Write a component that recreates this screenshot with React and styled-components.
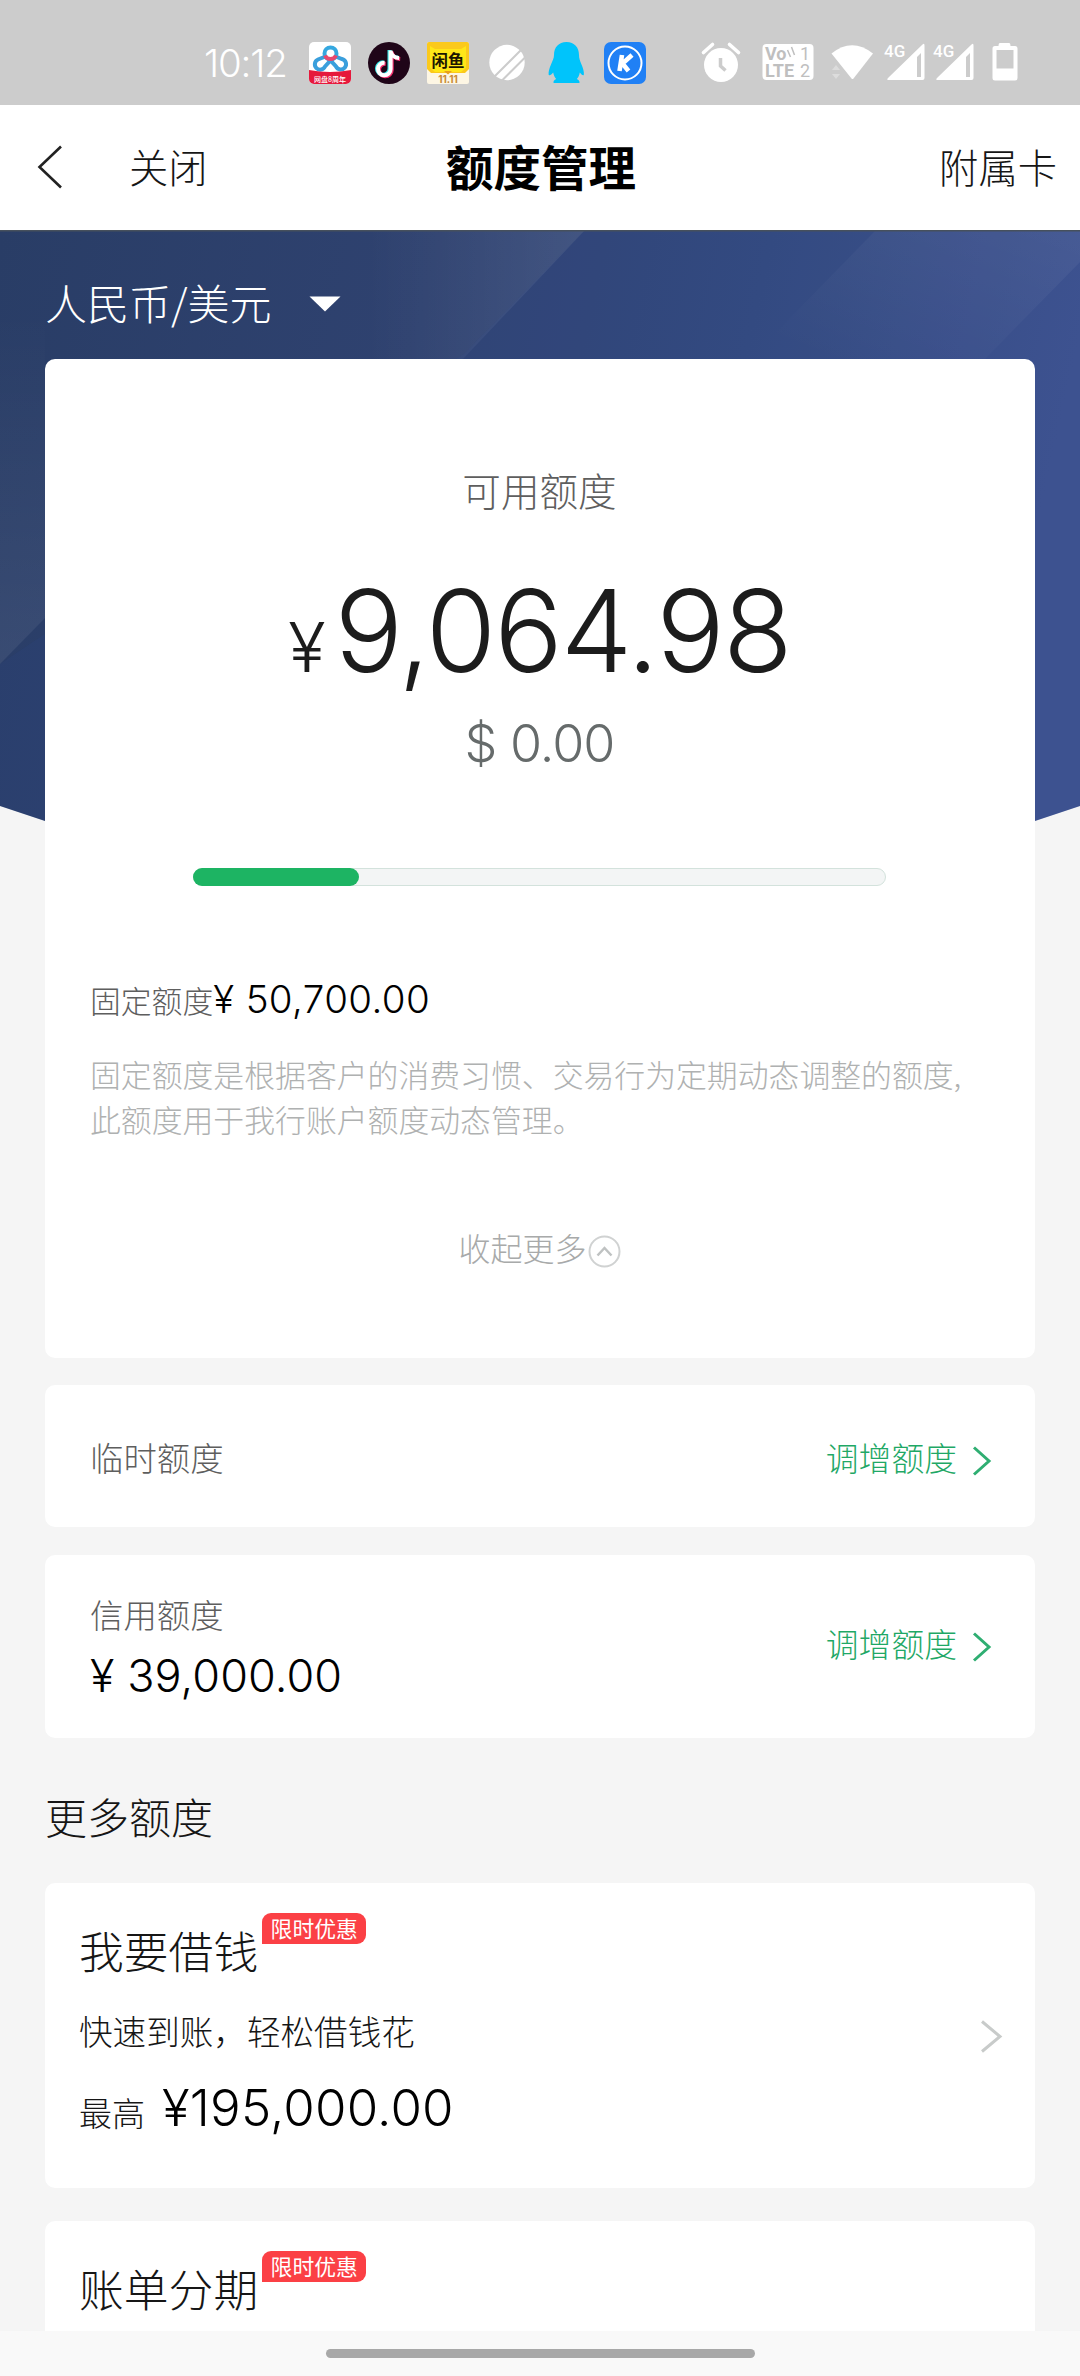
import React from 'react'
import styled, { createGlobalStyle, css } from 'styled-components'

const GlobalStyle = createGlobalStyle`
  * {
    box-sizing: border-box;
  }
  body {
    margin: 0;
    background: #f5f5f5;
    font-family: "Noto Sans CJK SC", sans-serif;
    font-weight: 300;
  }
  svg {
    display: block;
    flex: none;
    overflow: visible;
  }
`

const numberFont = css`
  font-family: Inter, "Liberation Sans", sans-serif;
  font-weight: 300;
  white-space: pre;
`

const Screen = styled.div`
  width: 1080px;
  height: 2376px;
  display: flex;
  flex-direction: column;
  overflow: hidden;
`

const StatusBar = styled.div`
  flex: none;
  height: 105px;
  padding: 0 49px 20px 204px;
  display: flex;
  align-items: flex-end;
  justify-content: space-between;
  background: #ccc;
`

const StatusGroup = styled.div`
  display: flex;
  align-items: center;
  height: 44px;
  gap: ${p => p.$gap || 0}px;
`

const Clock = styled.span`
  ${numberFont}
  width: 88px;
  font-size: 38.5px;
  line-height: 44px;
  letter-spacing: -1.2px;
  color: #fff;
`

const NavBar = styled.header`
  flex: none;
  height: 125px;
  padding: 0 23px 0 37px;
  display: grid;
  grid-template-columns: 1fr auto 1fr;
  align-items: center;
  background: #fff;
`

const NavLeft = styled.div`
  display: flex;
  align-items: center;
  gap: 66px;
`

const NavText = styled.span`
  font-size: 39.3px;
  line-height: 60px;
  color: #161616;
  margin-bottom: 3px;
  text-align: ${p => p.$align || 'left'};
`

const NavTitle = styled.h1`
  margin: 0 12px 4px 0;
  font-size: 47.5px;
  line-height: 60px;
  font-weight: 700;
  color: #000;
`

const Content = styled.main`
  flex: 1;
  min-height: 0;
  overflow: hidden;
  position: relative;
  padding: 0 45px;
  background: #f5f5f5;
`

const HeroArt = styled.svg`
  position: absolute;
  top: 0;
  left: 0;
`

const Stack = styled.div`
  position: relative;
`

const Currency = styled.div`
  height: 129px;
  padding: 14px 0 0;
  display: flex;
  align-items: center;
  gap: 37px;
  font-size: 42px;
  line-height: 60px;
  color: #fff;

  svg {
    margin-top: 4px;
  }
`

const Card = styled.section`
  height: ${p => p.$height}px;
  margin-top: ${p => p.$gap || 0}px;
  border-radius: 10px;
  background: #fff;
`

const LimitCard = styled(Card)`
  padding: 102px 46px 0 45px;
`

const RowCard = styled(Card)`
  padding: 0 44px 0 45px;
  display: flex;
  align-items: center;
  justify-content: space-between;
`

const CenterLabel = styled.div`
  text-align: center;
  font-size: 38.6px;
  line-height: 56px;
  color: #5e5e5e;
`

const BigAmount = styled.div`
  ${numberFont}
  margin-top: 49px;
  height: 130px;
  display: flex;
  align-items: baseline;
  justify-content: center;
  gap: 9px;
  font-size: 114px;
  line-height: 130px;
  letter-spacing: -1.9px;
  color: #1c1c1c;
`

const Yen = styled.span`
  font-size: 69px;
  letter-spacing: 0;
`

const Dollar = styled.div`
  ${numberFont}
  margin-top: 18px;
  text-align: center;
  font-size: 52px;
  line-height: 60px;
  letter-spacing: -1px;
  color: #666b6b;
`

const Track = styled.div`
  width: 693px;
  height: 18px;
  margin: 94px auto 0;
  border-radius: 9px;
  border: 1px solid #d3e2dc;
  background: #f3f5f5;
`

const Fill = styled.div`
  height: 18px;
  margin: -1px;
  border-radius: 9px;
  background: #1db463;
`

const FixedRow = styled.div`
  height: 50px;
  margin-top: 88px;
  display: flex;
  align-items: baseline;
  font-size: 30.8px;
  line-height: 50px;
  color: #5e5e5e;
`

const Amount = styled.span`
  ${numberFont}
  font-size: ${p => p.$size}px;
  line-height: ${p => p.$line || 60}px;
  letter-spacing: ${p => p.$track}px;
  color: #000;
`

const Note = styled.p`
  margin: 27px -10px 0 0;
  font-size: 30.85px;
  line-height: 45px;
  color: #afb1b1;
`

const Collapse = styled.div`
  margin-top: 86px;
  display: flex;
  justify-content: center;
  gap: 1px;
  font-size: 32px;
  line-height: 40px;
  color: #a8aaaa;

  svg {
    margin-top: 8px;
  }
`

const RowLabel = styled.div`
  font-size: 33.4px;
  line-height: 48px;
  color: #5e5e5e;
  margin-top: ${p => p.$drop || 0}px;
`

const CreditInfo = styled.div`
  display: flex;
  flex-direction: column;
  gap: 8px;
  margin-top: 3px;
`

const Raise = styled.a`
  display: flex;
  align-items: center;
  gap: 15px;
  font-size: 32.8px;
  line-height: 48px;
  color: #1fa866;
  margin-top: ${p => p.$drop || 0}px;

  span {
    margin-bottom: 7px;
  }
`

const SectionTitle = styled.h2`
  margin: 48px 0 37px;
  font-size: 42px;
  line-height: 60px;
  font-weight: 300;
  color: #161616;
`

const OfferCard = styled(Card)`
  padding: 35px 33px 0 34px;
  display: flex;
  justify-content: space-between;

  > svg {
    margin-top: 102px;
  }
`

const OfferHead = styled.div`
  height: 64px;
  display: flex;
  align-items: flex-start;
  gap: 4px;
  font-size: 44.8px;
  line-height: 64px;
  color: #161616;
`

const Badge = styled.span`
  width: 104px;
  height: 31px;
  margin-top: -5px;
  border-radius: 9px 9px 9px 0;
  background: #fb4045;
  color: #fff;
  font-size: 21.8px;
  font-weight: 400;
  line-height: 29px;
  text-align: center;
`

const OfferText = styled.div`
  margin-top: 25px;
  font-size: 33.6px;
  line-height: 48px;
  color: #161616;
`

const OfferAmount = styled.div`
  margin-top: 23px;
  height: 60px;
  display: flex;
  align-items: baseline;
  gap: 17px;
  font-size: 33px;
  line-height: 60px;
  color: #161616;
`

const GestureBar = styled.footer`
  flex: none;
  height: 45px;
  padding-top: 18px;
  background: #f9f9f9;

  &::before {
    content: '';
    display: block;
    width: 429px;
    height: 9px;
    margin: 0 auto;
    border-radius: 5px;
    background: #a8a8a8;
  }
`

const Chevron = ({ color, width = 19, height = 30, stroke = 3 }) => (
  <svg width={width} height={height} viewBox={`0 0 ${width} ${height}`} fill="none" stroke={color} strokeWidth={stroke}>
    <path d={`M2 1.5L${width - 2} ${height / 2}L2 ${height - 1.5}`} />
  </svg>
)

const AppIcons = () => (
  <>
    {/* cloud drive */}
    <svg width="42" height="42" viewBox="0 0 42 42">
      <rect width="42" height="42" rx="5" fill="#fff" />
      <g fill="none" strokeWidth="4">
        <path d="M16.500 14.500L9 17.500A5.300 5.300 0 1 0 16 24.500L21.500 18.500L27 24.500A5.300 5.300 0 1 0 33 17L26.500 14.500" stroke="#3a9fdc" />
        <circle cx="21.500" cy="11.500" r="6" stroke="#35a8e0" />
        <path d="M16 13.500a6 6 0 0 0 11 0" stroke="#e8486e" />
      </g>
      <path d="M0 28Q21 32 42 28V37a5 5 0 0 1-5 5H5a5 5 0 0 1-5-5z" fill="#e6193c" />
      <text x="21" y="39.500" fontSize="7" fontWeight="500" textAnchor="middle" fill="#fff">网盘8周年</text>
    </svg>
    {/* short video */}
    <svg width="42" height="42" viewBox="0 0 42 42">
      <circle cx="21" cy="21" r="21" fill="#1f0518" />
      <g fill="none" strokeWidth="4">
        <path d="M21.500 8v18.500a6.300 6.300 0 1 1-6-6.300M21.500 8.500c.8 4.500 4 6.700 8.500 7" stroke="#37e5e5" />
        <path d="M23.700 9.500v18.500a6.300 6.300 0 1 1-6-6.300M23.700 10c.8 4.500 4 6.700 8.500 7" stroke="#f5316f" />
        <path d="M22.600 8.500v18.500a6.300 6.300 0 1 1-6-6.300M22.600 9c.8 4.500 4 6.700 8.500 7" stroke="#fff" />
      </g>
    </svg>
    {/* second-hand market */}
    <svg width="42" height="42" viewBox="0 0 42 42">
      <rect width="42" height="42" rx="2" fill="#fdf6e4" />
      <path d="M0 2a2 2 0 0 1 2-2h38a2 2 0 0 1 2 2v25l-4 4H4l-4-4z" fill="#fbc91c" />
      <path d="M3 4l5 3h26l5-3v22l-5 4H8l-5-4z" fill="#ffe618" />
      <text x="21" y="24.500" fontSize="16.500" fontWeight="700" textAnchor="middle" fill="#1c1600">闲鱼</text>
      <path d="M17 29l4 3.500l4-3.500z" fill="#e8a01c" />
      <text x="21" y="41" fontSize="10" fontWeight="700" textAnchor="middle" fill="#c88a35" fontFamily="Inter">11.11</text>
    </svg>
    {/* striped ball */}
    <svg width="42" height="42" viewBox="0 0 42 42">
      <circle cx="21" cy="20.500" r="17.700" fill="#fff" />
      <path d="M8 35L36 7M16 38.500L40 14.500" stroke="#ccc" strokeWidth="2" />
    </svg>
    {/* penguin */}
    <svg width="42" height="42" viewBox="0 0 42 42">
      <path d="M21.500 0C29.500 0 34 5.500 34 13c0 3 .8 5.500 2.300 9 2 4.500 3 8.500 2.500 11-1 .8-2.500-.5-4-2.500-.5 3-1.500 5-3 6.500 2 .8 2.700 1.800 2.700 3.500q0 .5-.5.500H9q-.5 0-.5-.500c0-1.700.7-2.700 2.700-3.500-1.500-1.500-2.500-3.500-3-6.500-1.500 2-3.500 3.300-4.500 2.500-.5-2.500.5-6.500 2.500-11C7.700 18.500 9 16 9 13 9 5.500 13.500 0 21.500 0z" fill="#00c4fb" />
    </svg>
    {/* player */}
    <svg width="42" height="42" viewBox="0 0 42 42">
      <rect width="42" height="42" rx="7" fill="#2080f5" />
      <circle cx="21" cy="21" r="16.500" fill="none" stroke="#fff" strokeWidth="2" />
      <path d="M18 13L15.500 29M28 13L18.500 21.500L24.500 29" fill="none" stroke="#fff" strokeWidth="4.600" />
    </svg>
  </>
)

const Signal = () => (
  <svg width="49" height="44" viewBox="0 0 49 44">
    <path fillRule="evenodd" d="M39.500 3.500q2-2 2 1V37q0 2-2 2H6q-3 0-1-2zM34 16v20h4V12z" fill="#fff" />
    <text x="1" y="16" fontSize="17" fontWeight="500" fontFamily="Roboto" fill="#fff" stroke="#ccc" strokeWidth="3" paintOrder="stroke">4G</text>
  </svg>
)

const SystemIcons = () => (
  <>
    <svg width="62" height="44" viewBox="0 0 62 44">
      <circle cx="21" cy="24" r="17" fill="#fff" />
      <path d="M3.500 11.500L12.500 3.500M38.500 11.500L29.500 3.500" stroke="#fff" strokeWidth="3.600" strokeLinecap="round" />
      <path d="M20.500 17v8l5 4.500" fill="none" stroke="#ccc" strokeWidth="3.500" />
    </svg>
    <svg width="69" height="44" viewBox="0 0 69 44">
      <rect x="0.500" y="3" width="51" height="36" rx="4" fill="#fff" />
      <g fill="#bfbfbf" fontFamily="Roboto">
        <text x="3" y="19" fontSize="18" fontWeight="700">Vo</text>
        <text x="3" y="35.500" fontSize="18" fontWeight="700">LTE</text>
        <text x="38" y="19" fontSize="18" fontWeight="400">1</text>
        <text x="38" y="35.500" fontSize="18" fontWeight="400">2</text>
      </g>
      <path d="M25.500 9l3 7M29.500 6l3 8" stroke="#bfbfbf" strokeWidth="1.500" />
    </svg>
    <svg width="52" height="44" viewBox="0 0 52 44">
      <path d="M0.500 12.500Q21 -4 42 12.500L22.500 37.500q-1 1-2 0z" fill="#fff" />
      <path d="M1 29l4-5l4 5zM1 33l4 5l4-5z" fill="#dcdcdc" />
    </svg>
    <Signal />
    <Signal />
    <svg width="50" height="44" viewBox="0 0 50 44">
      <path fillRule="evenodd" d="M19 2h9q1.500 0 1.500 3H34q2.500 0 2.500 2.500V37q0 2.500-2.500 2.500H14q-2.500 0-2.500-2.500V7.500Q11.500 5 14 5h3.500q0-3 1.500-3zM15.500 9v18.500h17V9z" fill="#fff" />
    </svg>
  </>
)

const Hero = () => (
  <HeroArt width="1080" height="720" viewBox="0 0 1080 720">
    <defs>
      <linearGradient id="base" x1="0" y1="0" x2="1" y2="0.15">
        <stop offset="0" stopColor="#293d66" />
        <stop offset="0.4" stopColor="#2f4270" />
        <stop offset="0.7" stopColor="#344a7e" />
        <stop offset="1" stopColor="#3f538f" />
      </linearGradient>
      <linearGradient id="beam" x1="0" y1="0" x2="1" y2="0">
        <stop offset="0.35" stopColor="#fff" stopOpacity="0" />
        <stop offset="1" stopColor="#fff" stopOpacity="0.085" />
      </linearGradient>
      <linearGradient id="side" x1="0" y1="0" x2="0" y2="1">
        <stop offset="0" stopColor="#fff" stopOpacity="0" />
        <stop offset="1" stopColor="#fff" stopOpacity="0.07" />
      </linearGradient>
      <linearGradient id="right" x1="0" y1="1" x2="1" y2="0">
        <stop offset="0.1" stopColor="#fff" stopOpacity="0" />
        <stop offset="1" stopColor="#fff" stopOpacity="0.055" />
      </linearGradient>
      <clipPath id="shape">
        <path d="M0 0H1080V576L1035 591Q540 745 45 591L0 576z" />
      </clipPath>
    </defs>
    <g clipPath="url(#shape)">
      <rect width="1080" height="720" fill="url(#base)" />
      <path d="M585 0H1080V720H0V434L465 123z" fill="#3552a0" opacity="0.1" />
      <path d="M250 0H585L463 129H250z" fill="url(#beam)" />
      <path d="M876 0H1080V32L985 129H750z" fill="url(#right)" />
      <path d="M0 80H45V388L0 434z" fill="url(#side)" />
      <rect width="1080" height="1.500" fill="#46505c" />
    </g>
  </HeroArt>
)

const Offer = ({ title, gap, height, children }) => (
  <OfferCard $height={height} $gap={gap}>
    <div>
      <OfferHead>
        {title}
        <Badge>限时优惠</Badge>
      </OfferHead>
      {children}
    </div>
    <Chevron color="#c8cbca" width={22} height={33} />
  </OfferCard>
)

const usedRatio = 0.24

export default function App() {
  return (
    <Screen>
      <GlobalStyle />
      <StatusBar>
        <StatusGroup $gap={17}>
          <Clock>10:12</Clock>
          <AppIcons />
        </StatusGroup>
        <StatusGroup>
          <SystemIcons />
        </StatusGroup>
      </StatusBar>

      <NavBar>
        <NavLeft>
          <svg width="26" height="44" viewBox="0 0 26 44" fill="none" stroke="#222" strokeWidth="2.6">
            <path d="M24 0.500L2.500 21L24 41.500" />
          </svg>
          <NavText>关闭</NavText>
        </NavLeft>
        <NavTitle>额度管理</NavTitle>
        <NavText $align="right">附属卡</NavText>
      </NavBar>

      <Content>
        <Hero />
        <Stack>
          <Currency>
            人民币/美元
            <svg width="32" height="16" viewBox="0 0 32 16">
              <path d="M0.500 0.500h31L16 15.500z" fill="#fff" />
            </svg>
          </Currency>

          <LimitCard $height={999}>
            <CenterLabel>可用额度</CenterLabel>
            <BigAmount>
              <Yen>¥</Yen>
              <span>9,064.98</span>
            </BigAmount>
            <Dollar>$ 0.00</Dollar>
            <Track>
              <Fill style={{ width: `${usedRatio * 100}%` }} />
            </Track>
            <FixedRow>
              固定额度
              <Amount $size={38.5} $line={50} $track={0.4}>¥ 50,700.00</Amount>
            </FixedRow>
            <Note>固定额度是根据客户的消费习惯、交易行为定期动态调整的额度,<br />此额度用于我行账户额度动态管理。</Note>
            <Collapse>
              收起更多
              <svg width="33" height="33" viewBox="0 0 33 33" fill="none">
                <circle cx="16.500" cy="16.500" r="15" stroke="#d0d2d2" strokeWidth="2" />
                <path d="M9.500 20.500l7-7.500l7 7.500" stroke="#bfc2c2" strokeWidth="2.500" />
              </svg>
            </Collapse>
          </LimitCard>

          <RowCard $height={142} $gap={27}>
            <RowLabel $drop={2}>临时额度</RowLabel>
            <Raise $drop={9}>
              <span>调增额度</span>
              <Chevron color="#2fae72" />
            </Raise>
          </RowCard>

          <RowCard $height={183} $gap={28}>
            <CreditInfo>
              <RowLabel>信用额度</RowLabel>
              <Amount $size={45} $track={0.1}>¥ 39,000.00</Amount>
            </CreditInfo>
            <Raise>
              <span>调增额度</span>
              <Chevron color="#2fae72" />
            </Raise>
          </RowCard>

          <SectionTitle>更多额度</SectionTitle>

          <Offer title="我要借钱" height={305}>
            <OfferText>快速到账，轻松借钱花</OfferText>
            <OfferAmount>
              最高
              <Amount $size={51} $track={0.2}>¥195,000.00</Amount>
            </OfferAmount>
          </Offer>

          <Offer title="账单分期" height={305} gap={33} />
        </Stack>
      </Content>

      <GestureBar />
    </Screen>
  )
}
